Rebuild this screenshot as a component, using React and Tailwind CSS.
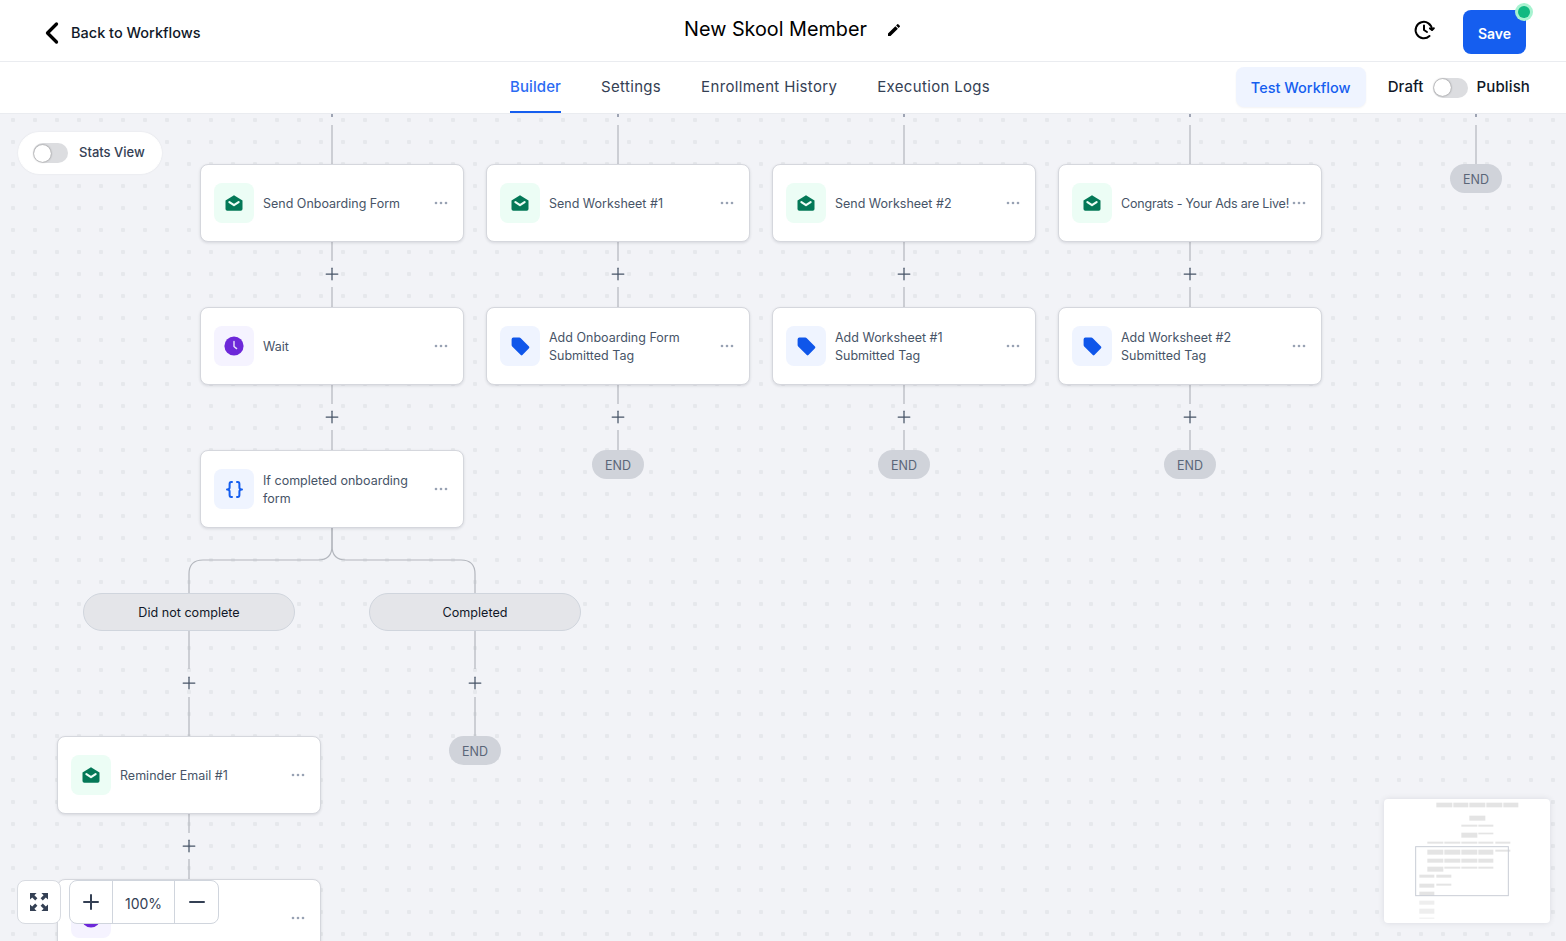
import React from 'react';
import { ChevronLeft, Minus, Plus } from 'lucide-react';
import { MdEdit } from 'react-icons/md';

const cols = [332, 618, 904, 1190];

const MailIcon = () => (
  <div className="w-10 h-10 rounded-lg bg-[#ecfdf5] flex items-center justify-center shrink-0">
    <svg width="18" height="16" viewBox="0 0 18 16">
      <path d="M0.5 5.5 L9 0.2 L17.5 5.5 V14 Q17.5 15.8 15.7 15.8 H2.3 Q0.5 15.8 0.5 14 Z" fill="#047857" />
      <path d="M4.4 7.2 L9 10.2 L13.6 7.2" fill="none" stroke="#ecfdf5" strokeWidth="2.2" strokeLinecap="round" strokeLinejoin="round" />
    </svg>
  </div>
);

const ClockIcon = () => (
  <div className="w-10 h-10 rounded-lg bg-[#f5f3ff] flex items-center justify-center shrink-0">
    <svg width="20" height="20" viewBox="0 0 20 20">
      <circle cx="10" cy="10" r="9.6" fill="#6d28d9" />
      <path d="M10 5.5 V10.5 L12.6 12.6" fill="none" stroke="#e9e3fb" strokeWidth="1.4" strokeLinecap="round" strokeLinejoin="round" />
    </svg>
  </div>
);

const TagIcon = () => (
  <div className="w-10 h-10 rounded-lg bg-[#eff4ff] flex items-center justify-center shrink-0">
    <svg width="19" height="19" viewBox="0 0 19 19">
      <path d="M2.4 0.6 H8.2 Q9.2 0.6 9.8 1.2 L18 9.6 Q18.8 10.4 18 11.2 L11.4 18 Q10.6 18.8 9.8 18 L1.2 9.4 Q0.6 8.8 0.6 8 V2.4 Q0.6 0.6 2.4 0.6 Z" fill="#0f56ea" />
    </svg>
  </div>
);

const BracesIcon = () => (
  <div className="w-10 h-10 rounded-lg bg-[#eff4ff] flex items-center justify-center shrink-0">
    <svg width="17" height="17" viewBox="0 0 17 17" fill="none" stroke="#155eef" strokeWidth="2" strokeLinecap="round" strokeLinejoin="round">
      <path d="M6 1 H5.2 Q3.6 1 3.6 3 V6.5 Q3.6 8.5 1 8.5 Q3.6 8.5 3.6 10.5 V14 Q3.6 16 5.2 16 H6" />
      <path d="M11 1 H11.8 Q13.4 1 13.4 3 V6.5 Q13.4 8.5 16 8.5 Q13.4 8.5 13.4 10.5 V14 Q13.4 16 11.8 16 H11" />
    </svg>
  </div>
);

const icons = { mail: MailIcon, clock: ClockIcon, tag: TagIcon, braces: BracesIcon };

const nodes = [
  { x: 332, y: 164, icon: 'mail', label: 'Send Onboarding Form' },
  { x: 618, y: 164, icon: 'mail', label: 'Send Worksheet #1' },
  { x: 904, y: 164, icon: 'mail', label: 'Send Worksheet #2' },
  { x: 1190, y: 164, icon: 'mail', label: 'Congrats - Your Ads are Live!', tight: true },
  { x: 332, y: 307, icon: 'clock', label: 'Wait' },
  { x: 618, y: 307, icon: 'tag', label: 'Add Onboarding Form\nSubmitted Tag' },
  { x: 904, y: 307, icon: 'tag', label: 'Add Worksheet #1\nSubmitted Tag' },
  { x: 1190, y: 307, icon: 'tag', label: 'Add Worksheet #2\nSubmitted Tag' },
  { x: 332, y: 450, icon: 'braces', label: 'If completed onboarding\nform' },
  { x: 189, y: 736, icon: 'mail', label: 'Reminder Email #1' },
  { x: 189, y: 879, icon: 'clock', label: 'Wait' },
];

const plusses = [
  [332, 274], [618, 274], [904, 274], [1190, 274],
  [332, 417], [618, 417], [904, 417], [1190, 417],
  [189, 683], [475, 683], [189, 846],
];

const ends = [[1476, 164], [618, 450], [904, 450], [1190, 450], [475, 736]];

const Toggle = () => (
  <div className="w-[35px] h-5 rounded-full bg-[#dcdde0] flex items-center shrink-0">
    <div className="w-[17px] h-[17px] ml-px rounded-full bg-white shadow-[0_0_2px_rgba(0,0,0,0.55)]"></div>
  </div>
);

const Node = ({ x, y, icon, label, tight }) => {
  const Icon = icons[icon];
  return (
    <div
      className="absolute w-[264px] h-[78px] bg-white rounded-lg border border-[#d5d7dd] shadow-[0_1px_3px_rgba(16,24,40,0.12)] flex items-center pl-[13px]"
      style={{ left: x - 132, top: y - 114 }}
    >
      <Icon />
      <div className={`ml-[9px] pt-[2px] w-[176px] whitespace-pre-line text-[12.5px] leading-[18px] text-[#475467] shrink-0 ${tight ? 'tracking-[-0.2px]' : ''}`}>{label}</div>
      <svg className="absolute right-[15px] top-[36px]" width="14" height="4" viewBox="0 0 14 4">
        <circle cx="2" cy="2" r="1.3" fill="#98a2b3" />
        <circle cx="7" cy="2" r="1.3" fill="#98a2b3" />
        <circle cx="12" cy="2" r="1.3" fill="#98a2b3" />
      </svg>
    </div>
  );
};

const Branch = ({ x, label }) => (
  <div
    className="absolute top-[479px] w-[212px] h-[38px] rounded-full bg-[#e4e5e9] border border-[#d0d5dd] flex items-center justify-center pt-[2px] text-[12.6px] text-[#101828]"
    style={{ left: x - 106 }}
  >
    {label}
  </div>
);

const minimapBlocks = [
  [198, 39, 48, 14], [249, 39, 45, 14], [297, 39, 48, 14], [348, 39, 48, 14], [399, 39, 45, 14],
  [297, 78, 48, 15], [273, 105, 48, 6], [324, 105, 45, 6], [273, 129, 48, 15], [324, 129, 45, 5],
  [171, 156, 48, 6], [222, 156, 48, 6], [273, 156, 48, 6], [324, 156, 45, 6], [375, 156, 45, 6],
  [171, 180, 48, 15], [222, 180, 48, 15], [273, 180, 48, 15], [324, 180, 45, 15], [375, 180, 45, 6],
  [171, 207, 48, 12], [222, 207, 48, 12], [273, 207, 48, 12], [324, 207, 45, 12],
  [171, 231, 48, 15], [222, 231, 48, 6], [273, 231, 48, 6], [324, 231, 45, 6],
  [147, 255, 45, 9], [198, 255, 45, 9], [147, 282, 45, 12], [198, 282, 45, 6],
  [147, 306, 45, 12], [147, 333, 45, 12], [147, 357, 45, 15], [147, 384, 45, 3],
];

export default function App() {
  return (
    <div className="h-screen overflow-hidden bg-white flex flex-col font-['Inter',sans-serif]">
      {/* Top bar */}
      <header className="h-[62px] shrink-0 border-b border-[#eaecf0] flex items-center pl-[34px] pr-10 relative">
        <div className="flex items-center flex-1 text-[14.5px] font-medium text-[#101828] mt-1">
          <ChevronLeft size={36} strokeWidth={2.2} className="text-black" />
          <span className="ml-px">Back to Workflows</span>
        </div>
        <div className="flex items-center mr-[-26px] -mt-[1px]">
          <span className="text-[19.8px] text-black">New Skool Member</span>
          <MdEdit size={16} className="ml-[19px] text-black" />
        </div>
        <div className="flex-1 flex items-center justify-end">
          <svg className="mr-[28px] -mt-[2px]" width="22" height="22" viewBox="0 0 22 22" fill="none" stroke="#000" strokeWidth="2" strokeLinecap="round" strokeLinejoin="round">
            <path d="M19 10.5 A8.2 8.2 0 1 0 16.5 17" />
            <path d="M11 6.5 V11 L14 13" />
            <path d="M20.8 9.2 L19 11 L17 9.4" />
          </svg>
          <button className="w-[63px] h-11 rounded-lg bg-[#155eef] text-white text-[14px] font-semibold relative mt-[2px] pt-[3px]">
            Save
            <span className="absolute -top-[4px] -right-[4px] w-3 h-3 rounded-full bg-[#10b981] ring-[3px] ring-[#a7f3d0]"></span>
          </button>
        </div>
      </header>

      {/* Tabs bar */}
      <div className="h-[52px] shrink-0 border-b border-[#eaecf0] flex items-center pl-[510px] pr-[36px] relative z-10 bg-white">
        <nav className="flex h-full gap-10 text-[15px] tracking-[0.33px] text-[#344054]">
          <a className="h-full flex items-center font-medium tracking-[0.1px] text-[#2b6bf3] border-b-2 border-[#155eef] pt-[2px]">Builder</a>
          <a className="h-full flex items-center pb-[1px]">Settings</a>
          <a className="h-full flex items-center pb-[1px]">Enrollment History</a>
          <a className="h-full flex items-center pb-[1px]">Execution Logs</a>
        </nav>
        <div className="ml-auto flex items-center">
          <button className="w-[130px] h-10 rounded-lg bg-[#eff4ff] text-[#155eef] text-[14.5px] font-medium shadow-[0_1px_2px_rgba(16,24,40,0.05)] pt-[1px] -mt-[1px]">Test Workflow</button>
          <span className="ml-[22px] text-[15px] tracking-[0.12px] font-medium text-[#101828] -mt-[1px]">Draft</span>
          <div className="ml-[9px]"><Toggle /></div>
          <span className="ml-[9px] text-[15px] tracking-[0.12px] font-medium text-[#101828] -mt-[1px]">Publish</span>
        </div>
      </div>

      {/* Canvas */}
      <main className="flex-1 relative overflow-hidden bg-[#f2f3f7] bg-[radial-gradient(circle,#e6e8ec_2px,transparent_2.5px)] bg-[length:22px_22px] bg-[position:2px_-5px]">
        <svg className="absolute left-0 top-0" width="1566" height="827" viewBox="0 114 1566 827" fill="none" stroke="#b3b6bd" strokeWidth="1.2">
          {[...cols, 1476].map((x) => (
            <g key={x}>
              <path d={`M${x} 114 V117`} stroke="#667085" />
              <path d={`M${x} 125 V164`} />
            </g>
          ))}
          {cols.map((x) => (
            <g key={x}>
              <path d={`M${x} 242 V261 M${x} 287 V307`} />
              <path d={`M${x} 385 V404 M${x} 430 V450`} />
            </g>
          ))}
          <path d="M332 528 V546 Q332 560 318 560 H203 Q189 560 189 574 V593" />
          <path d="M332 528 V546 Q332 560 346 560 H461 Q475 560 475 574 V593" />
          <path d="M189 631 V669 M189 697 V736 M475 631 V669 M475 697 V736" />
          <path d="M189 814 V833 M189 859 V879" />
        </svg>

        {plusses.map(([x, y]) => (
          <Plus
            key={`${x}-${y}`}
            size={20}
            strokeWidth={1.5}
            className="absolute text-[#475467]"
            style={{ left: x - 10, top: y - 114 - 10 }}
          />
        ))}

        {nodes.map((n) => <Node key={`${n.x}-${n.y}`} {...n} />)}

        <Branch x={189} label="Did not complete" />
        <Branch x={475} label="Completed" />

        {ends.map(([x, y]) => (
          <div
            key={`${x}-${y}`}
            className="absolute w-[52px] h-[29px] rounded-full bg-[#d0d3da] flex items-center justify-center pt-[3px] text-[12.5px] text-[#5b6678]"
            style={{ left: x - 26, top: y - 114 }}
          >
            END
          </div>
        ))}

        {/* Stats toggle */}
        <div className="absolute left-[18px] top-[18px] w-[144px] h-[42px] rounded-full bg-white border border-white shadow-[0_0_2px_rgba(16,24,40,0.08)] flex items-center pl-[14px]">
          <Toggle />
          <span className="ml-[11px] text-[13px] font-medium text-[#344054]">Stats View</span>
        </div>

        {/* Zoom controls */}
        <div className="absolute left-[17px] top-[766px] flex">
          <button className="w-11 h-11 rounded-lg bg-white border border-[#d8dbe1] flex items-center justify-center">
            <svg width="20" height="20" viewBox="0 0 20 20" fill="#344054">
              <path d="M1 1 H7.6 L5.4 3.2 L8.4 6.2 L6.2 8.4 L3.2 5.4 L1 7.6 Z" />
              <path d="M19 1 H12.4 L14.6 3.2 L11.6 6.2 L13.8 8.4 L16.8 5.4 L19 7.6 Z" />
              <path d="M1 19 H7.6 L5.4 16.8 L8.4 13.8 L6.2 11.6 L3.2 14.6 L1 12.4 Z" />
              <path d="M19 19 H12.4 L14.6 16.8 L11.6 13.8 L13.8 11.6 L16.8 14.6 L19 12.4 Z" />
            </svg>
          </button>
          <div className="ml-2 h-11 rounded-lg bg-white border border-[#d0d5dd] flex items-center text-[#344054]">
            <div className="w-[43px] h-full flex items-center justify-center border-r border-[#d0d5dd]"><Plus size={24} strokeWidth={2} /></div>
            <div className="w-[62px] h-full flex items-center justify-center border-r border-[#d0d5dd] text-[14px] pt-[2px]">100%</div>
            <div className="w-[43px] h-full flex items-center justify-center"><Minus size={24} strokeWidth={2} /></div>
          </div>
        </div>

        {/* Minimap */}
        <div className="absolute left-[1384px] top-[685px] w-[166px] h-[124px] bg-white rounded shadow-[0_0_6px_rgba(16,24,40,0.1)]">
          <svg width="166" height="124" viewBox="42 28 496 372">
            {minimapBlocks.map(([x, y, w, h]) => (
              <rect key={`${x}-${y}-${w}`} x={x} y={y} width={w} height={h} fill={y > 330 ? '#eeeeee' : '#e4e4e4'} />
            ))}
            <rect x="136" y="171" width="278" height="147" fill="none" stroke="#c9cdd6" strokeWidth="3" />
          </svg>
        </div>
      </main>
    </div>
  );
}
